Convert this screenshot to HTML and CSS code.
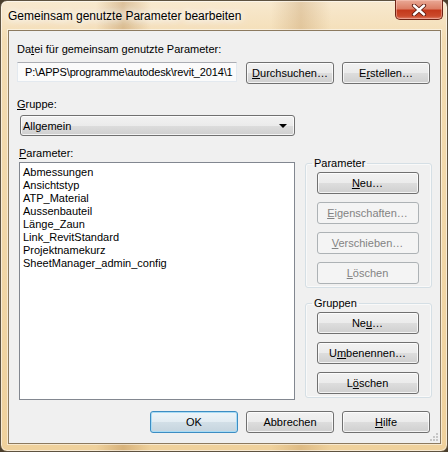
FILE: index.html
```html
<!DOCTYPE html>
<html lang="de">
<head>
    <meta charset="UTF-8">
    <title>Gemeinsam genutzte Parameter bearbeiten</title>
    <link rel="stylesheet" href="styles.css">
</head>
<body>
    <div class="window">
        <div class="titlebar">
            <span class="title">Gemeinsam genutzte Parameter bearbeiten</span>
            <div class="close">
                <svg width="16" height="12" viewBox="0 0 16 12">
                    <path d="M3 1.5 L13 10.5 M13 1.5 L3 10.5" stroke="#5a1a10" stroke-width="4.2" stroke-linecap="round"/>
                    <path d="M3 1.5 L13 10.5 M13 1.5 L3 10.5" stroke="#fff" stroke-width="2.4" stroke-linecap="round"/>
                </svg>
            </div>
        </div>
        <div class="client">
            <div class="lbl">Da<u>t</u>ei für gemeinsam genutzte Parameter:</div>
            <div class="file-row">
                <div class="path">P:\APPS\programme\autodesk\revit_2014\1</div>
                <button class="btn"><u>D</u>urchsuchen…</button>
                <button class="btn">E<u>r</u>stellen…</button>
            </div>
            <div class="lbl group-lbl"><u>G</u>ruppe:</div>
            <div class="combo">
                <span>Allgemein</span>
                <span class="arrow"></span>
            </div>
            <div class="main">
                <div class="left">
                    <div class="lbl"><u>P</u>arameter:</div>
                    <ul class="list">
                        <li>Abmessungen</li>
                        <li>Ansichtstyp</li>
                        <li>ATP_Material</li>
                        <li>Aussenbauteil</li>
                        <li>Länge_Zaun</li>
                        <li>Link_RevitStandard</li>
                        <li>Projektnamekurz</li>
                        <li>SheetManager_admin_config</li>
                    </ul>
                </div>
                <div class="side">
                    <fieldset class="groupbox">
                        <legend>Parameter</legend>
                        <div class="stack">
                            <button class="btn wide"><u>N</u>eu…</button>
                            <button class="btn wide" disabled><u>E</u>igenschaften…</button>
                            <button class="btn wide" disabled><u>V</u>erschieben…</button>
                            <button class="btn wide" disabled><u>L</u>öschen</button>
                        </div>
                    </fieldset>
                    <fieldset class="groupbox second">
                        <legend>Gruppen</legend>
                        <div class="stack">
                            <button class="btn wide">Ne<u>u</u>…</button>
                            <button class="btn wide">U<u>m</u>benennen…</button>
                            <button class="btn wide">L<u>ö</u>schen</button>
                        </div>
                    </fieldset>
                </div>
            </div>
            <div class="footer">
                <button class="btn default">OK</button>
                <button class="btn">Abbrechen</button>
                <button class="btn"><u>H</u>ilfe</button>
            </div>
            <svg class="grip" width="8" height="8" viewBox="0 0 8 8">
                <rect x="6" y="0" width="2" height="2" fill="#c6c6c6"/>
                <rect x="3" y="3" width="2" height="2" fill="#c6c6c6"/>
                <rect x="6" y="3" width="2" height="2" fill="#c6c6c6"/>
                <rect x="0" y="6" width="2" height="2" fill="#c6c6c6"/>
                <rect x="3" y="6" width="2" height="2" fill="#c6c6c6"/>
                <rect x="6" y="6" width="2" height="2" fill="#c6c6c6"/>
            </svg>
        </div>
    </div>
</body>
</html>
```

FILE: styles.css
```css
* { box-sizing: border-box; }
body { margin: 0; background: #4a3e2c; font-family: "Segoe UI", "Liberation Sans", Arial, sans-serif; font-size: 11px; color: #000; }

.window { width: 448px; height: 452px; border: 1px solid #5e5240; border-radius: 7px; display: flex; flex-direction: column;
    background:
        linear-gradient(to right, rgba(255,255,255,0) 95px, rgba(170,120,60,.35) 122px, rgba(255,255,255,0) 150px, rgba(255,255,255,0) 270px, rgba(170,120,60,.25) 300px, rgba(255,255,255,0) 330px),
        linear-gradient(to bottom, #f8e9cf 0px, #f3dcb2 40px, #efd19c 452px);
    box-shadow: inset 0 0 0 1px rgba(255,255,255,.55); }

.titlebar { height: 29px; display: flex; align-items: flex-start; }
.title { padding: 7px 0 0 7px; font-size: 12px; line-height: 16px; text-shadow: 0 0 6px #fff, 0 0 10px #fff, 0 0 12px #fff; }
.close { margin: -1px 4px 0 auto; width: 48px; height: 20px; border: 1px solid #6e2416; border-top: none; border-radius: 0 0 5px 5px;
    background: linear-gradient(to bottom, #e9a996 0%, #dc7f66 45%, #c4391c 55%, #cb4a2c 85%, #e0806a 100%);
    box-shadow: inset 0 0 0 1px rgba(255,210,200,.45); display: flex; align-items: center; justify-content: center; }

.client { position: relative; width: 433px; height: 414px; margin-left: 7px; background: #f0f0f0; border: 1px solid #8c7a5f;
    box-shadow: 0 0 0 1px rgba(255,255,255,.5); padding: 11px 10px 0 8px; }

.lbl { line-height: 15px; white-space: nowrap; }
.group-lbl { margin-top: 13px; }

.file-row { display: flex; margin-top: 5px; height: 22px; }
.path { width: 220px; height: 20px; line-height: 18px; padding-left: 7px; margin-right: 9px; white-space: nowrap; overflow: hidden;
    letter-spacing: -0.15px; background: #fbfbfb; border: 1px solid #e3e9ef; border-top-color: #abadb3; }
.file-row .btn + .btn { margin-left: 8px; }

.btn { font: inherit; color: #000; width: 88px; height: 22px; padding: 0; border: 1px solid #707070; border-radius: 3px;
    background: linear-gradient(to bottom, #f2f2f2 0%, #ebebeb 50%, #dddddd 51%, #cfcfcf 100%);
    box-shadow: inset 0 0 0 1px rgba(255,255,255,.75); }
.btn:disabled { color: #838383; border-color: #adb2b5; background: #f4f4f4; box-shadow: none; }
.btn.default { border-color: #3c8dc3; background: linear-gradient(to bottom, #eef5f9 0%, #e2ecf2 50%, #d2dfe7 51%, #c5d4de 100%);
    box-shadow: inset 0 0 0 1px #a9dcf5; }
.btn.wide { width: 102px; }

.combo { display: flex; align-items: center; justify-content: space-between; width: 275px; height: 21px; margin: 3px 0 0 3px; padding: 0 7px 0 2px;
    border: 1px solid #707070; border-radius: 3px; background: linear-gradient(to bottom, #f2f2f2 0%, #ebebeb 50%, #dddddd 51%, #cfcfcf 100%);
    box-shadow: inset 0 0 0 1px rgba(255,255,255,.75); }
.arrow { width: 0; height: 0; border-left: 4px solid transparent; border-right: 4px solid transparent; border-top: 4px solid #000; }

.main { display: grid; grid-template-columns: 276px 127px; column-gap: 10px; margin: 10px 0 0 2px; }
.list { list-style: none; margin: 1px 0 0; padding: 3px 0 0 3px; height: 238px; background: #fff; border: 1px solid #828790; line-height: 13px; }

.side { padding-top: 10px; }
.groupbox { margin: 0; padding: 0 0 3px; border: 1px solid #d5dfe5; border-radius: 3px; box-shadow: inset 0 0 0 1px rgba(255,255,255,.6); min-width: 0; }
.groupbox legend { margin-left: 6px; padding: 0 2px; line-height: 15px; }
.groupbox.second { margin-top: 8px; }
.stack { display: flex; flex-direction: column; align-items: center; gap: 8px; margin-top: 1px; padding-right: 2px; }

.footer { display: flex; justify-content: flex-end; gap: 8px; margin-top: 11px; }

.grip { position: absolute; right: 2px; bottom: 2px; }
```
